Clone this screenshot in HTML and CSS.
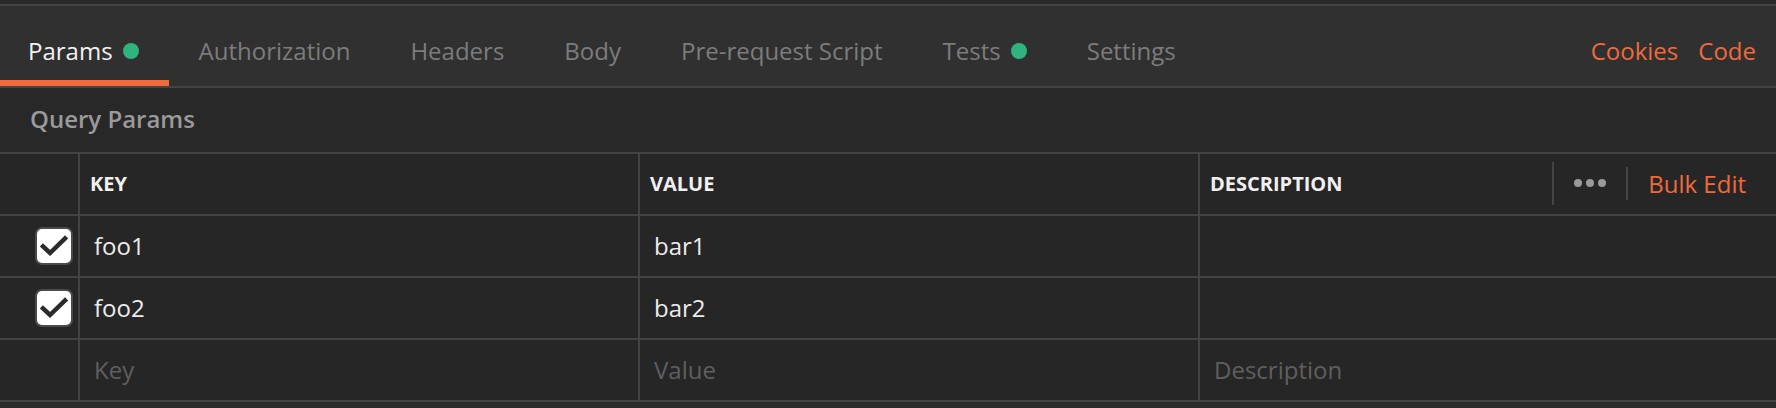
FILE: index.html
```html
<!DOCTYPE html>
<html>
<head>
<meta charset="utf-8">
<link rel="stylesheet" href="styles.css">
</head>
<body>
<div class="top-strip"></div>
<div class="tabbar">
  <div class="tabs">
    <div class="tab active">Params<span class="dot"></span></div>
    <div class="tab">Authorization</div>
    <div class="tab">Headers</div>
    <div class="tab">Body</div>
    <div class="tab">Pre-request Script</div>
    <div class="tab">Tests<span class="dot"></span></div>
    <div class="tab">Settings</div>
  </div>
  <div class="links">
    <span class="link">Cookies</span>
    <span class="link">Code</span>
  </div>
</div>
<div class="section-title">Query Params</div>
<div class="table">
  <div class="row head">
    <div class="cell check"></div>
    <div class="cell">KEY</div>
    <div class="cell">VALUE</div>
    <div class="cell desc-head">
      <span>DESCRIPTION</span>
      <div class="head-actions">
        <span class="sep tall"></span>
        <span class="dots"><i></i><i></i><i></i></span>
        <span class="sep short"></span>
        <span class="bulk">Bulk Edit</span>
      </div>
    </div>
  </div>
  <div class="row">
    <div class="cell check"><span class="box"><svg width="34" height="34" viewBox="0 0 34 34"><path d="M6 17.5 L13 24 L28 9.5" fill="none" stroke="#2b2b2b" stroke-width="4.5" stroke-linecap="square"/></svg></span></div>
    <div class="cell text">foo1</div>
    <div class="cell text">bar1</div>
    <div class="cell text"></div>
  </div>
  <div class="row">
    <div class="cell check"><span class="box"><svg width="34" height="34" viewBox="0 0 34 34"><path d="M6 17.5 L13 24 L28 9.5" fill="none" stroke="#2b2b2b" stroke-width="4.5" stroke-linecap="square"/></svg></span></div>
    <div class="cell text">foo2</div>
    <div class="cell text">bar2</div>
    <div class="cell text"></div>
  </div>
  <div class="row">
    <div class="cell check"></div>
    <div class="cell text ph">Key</div>
    <div class="cell text ph">Value</div>
    <div class="cell text ph">Description</div>
  </div>
</div>
</body>
</html>
```

FILE: styles.css
```css
* { box-sizing: border-box; }
html, body { margin: 0; padding: 0; }
body {
  background: #2b2b2b;
  font-family: "Open Sans", "Liberation Sans", sans-serif;
  width: 1776px;
  height: 408px;
  overflow: hidden;
}
.top-strip { height: 4px; background: #2a2a2a; }
.tabbar {
  display: flex;
  justify-content: space-between;
  height: 84px;
  background: #303030;
  border-top: 2px solid #434343;
  border-bottom: 2px solid #434343;
}
.tabs { display: flex; }
.tab {
  height: 80px;
  padding: 29px 30px 0;
  font-size: 24px;
  line-height: 32px;
  color: #7c7c7c;
  white-space: nowrap;
}
.tab.active {
  color: #f2f2f2;
  border-bottom: 6px solid #f06a3c;
  padding-left: 28px;
}
.dot {
  display: inline-block;
  width: 16px;
  height: 16px;
  border-radius: 50%;
  background: #2fb47f;
  margin-left: 10px;
  vertical-align: 1px;
}
.links {
  display: flex;
  gap: 20px;
  padding: 29px 20px 0 0;
  font-size: 24px;
  line-height: 32px;
}
.link { color: #ef6a3c; }
.section-title {
  height: 64px;
  padding: 15px 0 0 30px;
  font-size: 24px;
  line-height: 32px;
  font-weight: 600;
  color: #9a9a9a;
  background: #282828;
}
.table {
  border-top: 2px solid #434343;
  background: #262626;
}
.row {
  display: grid;
  grid-template-columns: 78px 560px 560px 1fr;
  height: 62px;
  border-bottom: 2px solid #434343;
}
.cell {
  display: flex;
  align-items: center;
  border-left: 2px solid #434343;
  padding-left: 13px;
  font-size: 24px;
  color: #ececec;
  white-space: nowrap;
}
.cell.check {
  border-left: none;
  padding: 0 7px 0 0;
  justify-content: flex-end;
}
.row.head .cell {
  font-size: 20px;
  font-weight: 700;
  color: #f0f0f0;
  padding-left: 10px;
  padding-bottom: 2px;
}
.row.head .cell.check { padding: 0; }
.cell.text { padding-left: 14px; padding-bottom: 2px; }
.cell.ph { color: #5f5f5f; }
.desc-head { justify-content: space-between; }
.head-actions {
  display: flex;
  align-items: center;
  padding-right: 30px;
}
.sep {
  display: block;
  width: 2px;
  background: #444;
}
.sep.tall { height: 43px; margin-right: 20px; }
.sep.short { height: 33px; margin-left: 20px; margin-right: 20px; }
.dots { display: flex; gap: 4px; }
.dots i {
  display: block;
  width: 8px;
  height: 8px;
  border-radius: 50%;
  background: #9a9a9a;
}
.bulk {
  font-size: 24px;
  font-weight: 400;
  color: #ef6a3c;
}
.box {
  width: 34px;
  height: 34px;
  border-radius: 5px;
  background: #fff;
  box-shadow: 0 0 0 2px #4a4a4a;
  display: block;
}
.box svg { display: block; }
```
